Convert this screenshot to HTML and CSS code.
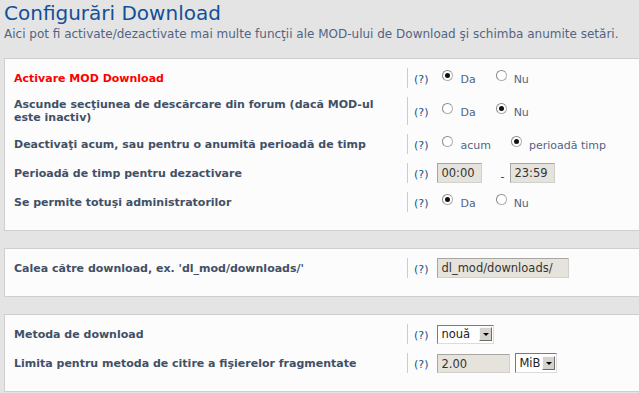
FILE: index.html
```html
<!DOCTYPE html>
<html lang="ro">
<head>
    <meta charset="UTF-8">
    <meta name="viewport" content="width=device-width, initial-scale=1.0">
    <title>Configurări Download</title>
    <link rel="stylesheet" href="styles.css">
</head>
<body>
    <h1>Configurări Download</h1>
    <p class="intro">Aici pot fi activate/dezactivate mai multe funcţii ale MOD-ului de Download şi schimba anumite setări.</p>

    <div class="panel">
        <div class="row">
            <div class="label red">Activare MOD Download</div>
            <div class="field">
                <span class="help">(?)</span>
                <label class="opt"><span class="radio checked"></span>Da</label>
                <label class="opt"><span class="radio"></span>Nu</label>
            </div>
        </div>
        <div class="row tall">
            <div class="label">Ascunde secţiunea de descărcare din forum (dacă MOD-ul este inactiv)</div>
            <div class="field">
                <span class="help">(?)</span>
                <label class="opt"><span class="radio"></span>Da</label>
                <label class="opt"><span class="radio checked"></span>Nu</label>
            </div>
        </div>
        <div class="row">
            <div class="label">Deactivaţi acum, sau pentru o anumită perioadă de timp</div>
            <div class="field">
                <span class="help">(?)</span>
                <label class="opt"><span class="radio"></span>acum</label>
                <label class="opt"><span class="radio checked"></span>perioadă timp</label>
            </div>
        </div>
        <div class="row">
            <div class="label">Perioadă de timp pentru dezactivare</div>
            <div class="field">
                <span class="help">(?)</span>
                <span class="input time">00:00</span>
                <span class="dash">-</span>
                <span class="input time">23:59</span>
            </div>
        </div>
        <div class="row">
            <div class="label">Se permite totuşi administratorilor</div>
            <div class="field">
                <span class="help">(?)</span>
                <label class="opt"><span class="radio checked"></span>Da</label>
                <label class="opt"><span class="radio"></span>Nu</label>
            </div>
        </div>
    </div>

    <div class="panel">
        <div class="row">
            <div class="label">Calea către download, ex. 'dl_mod/downloads/'</div>
            <div class="field">
                <span class="help">(?)</span>
                <span class="input path">dl_mod/downloads/</span>
            </div>
        </div>
    </div>

    <div class="panel">
        <div class="row">
            <div class="label">Metoda de download</div>
            <div class="field">
                <span class="help">(?)</span>
                <span class="select method"><span class="value">nouă</span><span class="arrow"></span></span>
            </div>
        </div>
        <div class="row">
            <div class="label">Limita pentru metoda de citire a fişierelor fragmentate</div>
            <div class="field">
                <span class="help">(?)</span>
                <span class="input size">2.00</span>
                <span class="select unit"><span class="value">MiB</span><span class="arrow"></span></span>
            </div>
        </div>
    </div>
</body>
</html>
```

FILE: styles.css
```css
html {
    overflow: hidden;
}
body {
    margin: 0;
    padding: 0 0 0 4px;
    background: #e4e4e4;
    font-family: "DejaVu Sans", Verdana, sans-serif;
    font-size: 11px;
    color: #536482;
}
h1 {
    margin: 0;
    font-family: "DejaVu Sans", sans-serif;
    font-weight: normal;
    font-size: 20px;
    line-height: 26px;
    color: #115098;
}
.intro {
    margin: 1px 0 0 0;
    font-size: 12px;
    line-height: 14px;
    color: #536482;
}
.panel {
    margin: 17px -60px 15px 0;
    padding: 9px 0 18px 0;
    background: #fcfcfc;
    border: 1px solid #cfcfcf;
}
.row {
    display: grid;
    grid-template-columns: 402px 1fr;
    min-height: 20px;
    margin-bottom: 9px;
}
.row:last-child {
    margin-bottom: 0;
}
.row.tall {
    min-height: 28px;
}
.label {
    padding: 0 10px 0 9px;
    font-weight: bold;
    color: #425067;
    line-height: 13px;
    align-self: center;
}
.label.red {
    color: #ff0000;
}
.field {
    border-left: 1px solid #cccccc;
    padding-left: 6px;
    display: flex;
    align-items: center;
    white-space: nowrap;
}
.help {
    color: #105289;
    margin-right: 9px;
    padding-top: 3px;
}
.opt {
    display: inline-flex;
    align-items: center;
    padding-top: 2px;
}
.opt:first-of-type {
    margin-right: 15px;
}
.radio {
    width: 11px;
    height: 11px;
    box-sizing: border-box;
    border-radius: 50%;
    border: 1px solid #b0b0b0;
    border-top-color: #8a8a8a;
    border-left-color: #8a8a8a;
    background: #ffffff;
    margin: 0 7px 0 5px;
    position: relative;
    top: -4px;
}
.radio.checked::after {
    content: "";
    position: absolute;
    left: 2px;
    top: 2px;
    width: 5px;
    height: 5px;
    border-radius: 50%;
    background: #111111;
}
.input {
    display: inline-block;
    box-sizing: border-box;
    height: 20px;
    line-height: 18px;
    padding: 0 3px;
    background: #e6e3dd;
    border: 1px solid #d2d0cb;
    border-top-color: #a8a6a1;
    border-left-color: #a8a6a1;
    color: #333333;
    font-size: 11.5px;
}
.input.time {
    width: 45px;
}
.dash {
    margin: 6px 6px 0 18px;
    color: #333333;
}
.input.path {
    width: 132px;
}
.input.size {
    width: 73px;
    height: 19px;
    margin-right: 5px;
}
.select {
    display: inline-flex;
    align-items: center;
    box-sizing: border-box;
    height: 19px;
    padding: 1px;
    background: #ffffff;
    border: 1px solid #7a7a7a;
    border-right-color: #dcdcdc;
    border-bottom-color: #dcdcdc;
    color: #222222;
    font-size: 11.5px;
}
.select .value {
    flex: 1;
    padding-left: 2px;
}
.select.method {
    width: 57px;
}
.select.unit {
    width: 42px;
    height: 20px;
}
.arrow {
    width: 13px;
    height: 14px;
    box-sizing: border-box;
    background: #d6d3ce;
    border: 1px solid #f8f8f8;
    border-right-color: #6d6d6d;
    border-bottom-color: #6d6d6d;
    display: flex;
    align-items: center;
    justify-content: center;
}
.arrow::after {
    content: "";
    border-left: 3px solid transparent;
    border-right: 3px solid transparent;
    border-top: 3px solid #000000;
}
```
